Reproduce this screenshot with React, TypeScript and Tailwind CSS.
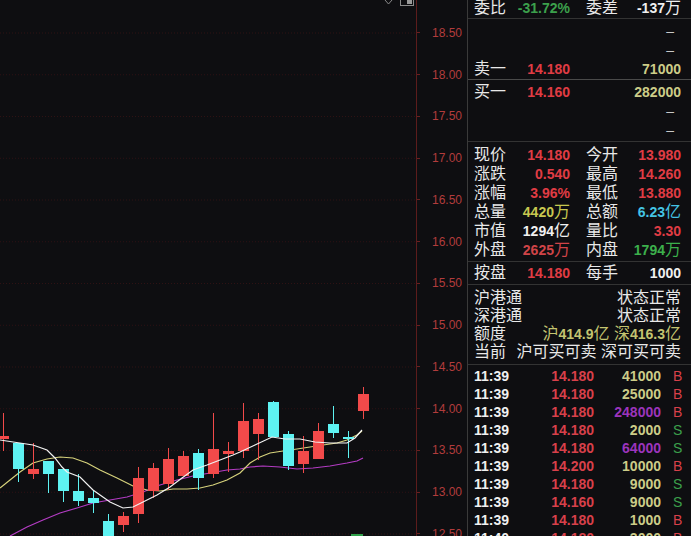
import type { ReactNode } from 'react';

type Candle = {
  x: number;
  top: number;
  bottom: number;
  high: number;
  low: number;
  up: boolean;
};

// pixel y values read off the chart (body top/bottom, wick high/low)
const raw: [number, number, number, number, boolean][] = [
  [436, 439, 413, 451, true],
  [443, 469, 443, 482, false],
  [469, 474, 443, 479, true],
  [461, 474, 461, 493, false],
  [469, 491, 469, 502, false],
  [491, 501, 474, 506, false],
  [498, 503, 491, 513, false],
  [521, 540, 514, 540, false],
  [516, 525, 512, 532, true],
  [478, 514, 467, 523, true],
  [468, 491, 463, 498, true],
  [459, 484, 448, 490, true],
  [456, 476, 451, 476, true],
  [453, 478, 449, 490, false],
  [449, 474, 413, 478, true],
  [451, 454, 442, 472, true],
  [421, 451, 403, 458, true],
  [419, 434, 413, 460, true],
  [402, 437, 401, 437, false],
  [434, 466, 431, 470, false],
  [451, 464, 436, 473, true],
  [431, 459, 423, 459, true],
  [424, 433, 406, 438, false],
  [437, 439, 431, 458, false],
  [394, 411, 387, 419, true],
];

const candles: Candle[] = raw.map(([top, bottom, high, low, up], i) => ({
  x: i === 0 ? -2 : 13 + 15 * (i - 1),
  top,
  bottom,
  high,
  low,
  up,
}));

const ma5 = '0,440 33,445 47,450 55,458 62,467 67,472 80,477 93,490 110,502 123,508 133,507 143,502 157,495 170,487 182,478 193,470 207,465 220,460 233,455 240,452 255,445 272,437 285,439 300,439 315,442 330,443 347,443 355,438 362,430';
const ma10 = '0,488 10,480 20,472 33,463 47,459 60,457 73,458 87,463 100,470 117,478 133,486 147,490 160,491 173,489 187,489 200,488 213,485 227,480 240,473 250,463 260,457 270,453 283,451 297,449 310,447 323,445 337,443 347,440 357,435 362,431';
const ma20 = '10,536 27,527 43,520 60,513 77,508 93,503 110,500 127,497 143,492 160,485 177,480 193,476 210,473 227,470 240,469 250,467 263,466 280,467 297,469 313,468 330,466 347,463 357,461 363,458';

const prices = ['18.50', '18.00', '17.50', '17.00', '16.50', '16.00', '15.50', '15.00', '14.50', '14.00', '13.50', '13.00', '12.50'];

const RED = 'text-[#e03c44]';
const YELLOW = 'text-[#cccc88]';

function Chart() {
  return (
    <svg width="416" height="536" viewBox="0 0 416 536" className="block">
      {prices.map((p, i) => (
        <line
          key={p}
          x1="0"
          x2="416"
          y1={33 + i * 41.75}
          y2={33 + i * 41.75}
          stroke="#2e1214"
          strokeDasharray="1 2"
        />
      ))}

      {/* top-right tool icons */}
      <polyline points="385,0 388.5,4 392,0" fill="none" stroke="#8a8a8a" />
      <rect x="400.5" y="-2.5" width="13" height="8" fill="none" stroke="#8a8a8a" />
      <rect x="407" y="-1" width="5" height="5" fill="#9a9a9a" />

      <polyline points={ma20} fill="none" stroke="#b43cc4" strokeWidth="1.2" />
      <polyline points={ma10} fill="none" stroke="#d6d27c" strokeWidth="1.2" />

      {candles.map((c, i) => (
        <g key={i}>
          <line
            x1={c.x + 5.5}
            x2={c.x + 5.5}
            y1={c.high}
            y2={c.low}
            stroke={c.up ? '#f24a4a' : '#5ef2f2'}
          />
          <rect
            x={c.x}
            y={c.top}
            width="11"
            height={Math.max(c.bottom - c.top, 2)}
            fill={c.up ? '#f24a4a' : '#5ef2f2'}
          />
        </g>
      ))}

      <polyline points={ma5} fill="none" stroke="#f2f2f2" strokeWidth="1.2" />
      <rect x="351" y="534" width="12" height="2" fill="#2fa04a" />
    </svg>
  );
}

function Num({ children, className = '' }: { children: ReactNode; className?: string }) {
  return <span className={`text-[14px] font-bold ${className}`}>{children}</span>;
}

function Dash() {
  return <span className="pr-[7px] text-[14px] text-[#c8c8c8]">–</span>;
}

type Stat = { label: string; value: ReactNode; color: string };

function StatRow({ left, right }: { left: Stat; right: Stat }) {
  return (
    <div className="grid h-[19px] shrink-0 grid-cols-[96px_95px] items-center gap-x-[16px]">
      <div className="flex items-center justify-between">
        <span>{left.label}</span>
        <span className={left.color}>{left.value}</span>
      </div>
      <div className="flex items-center justify-between">
        <span>{right.label}</span>
        <span className={right.color}>{right.value}</span>
      </div>
    </div>
  );
}

function Unit({ n, u }: { n: string; u: string }) {
  return (
    <>
      <span className="text-[14px] font-bold">{n}</span>
      <span className="text-[16px]">{u}</span>
    </>
  );
}

const stats: [Stat, Stat][] = [
  [
    { label: '现价', value: <Num>14.180</Num>, color: RED },
    { label: '今开', value: <Num>13.980</Num>, color: RED },
  ],
  [
    { label: '涨跌', value: <Num>0.540</Num>, color: RED },
    { label: '最高', value: <Num>14.260</Num>, color: RED },
  ],
  [
    { label: '涨幅', value: <Num>3.96%</Num>, color: RED },
    { label: '最低', value: <Num>13.880</Num>, color: RED },
  ],
  [
    { label: '总量', value: <Unit n="4420" u="万" />, color: 'text-[#c8c850]' },
    { label: '总额', value: <Unit n="6.23" u="亿" />, color: 'text-[#44c4e4]' },
  ],
  [
    { label: '市值', value: <Unit n="1294" u="亿" />, color: 'text-[#f0f0f0]' },
    { label: '量比', value: <Num>3.30</Num>, color: RED },
  ],
  [
    { label: '外盘', value: <Unit n="2625" u="万" />, color: 'text-[#d04448]' },
    { label: '内盘', value: <Unit n="1794" u="万" />, color: 'text-[#3cb04c]' },
  ],
];

const trades: [string, string, string, 'B' | 'S', boolean][] = [
  ['11:39', '14.180', '41000', 'B', false],
  ['11:39', '14.180', '25000', 'B', false],
  ['11:39', '14.180', '248000', 'B', true],
  ['11:39', '14.180', '2000', 'S', false],
  ['11:39', '14.180', '64000', 'S', true],
  ['11:39', '14.200', '10000', 'B', false],
  ['11:39', '14.180', '9000', 'S', false],
  ['11:39', '14.160', '9000', 'S', false],
  ['11:39', '14.180', '1000', 'B', false],
  ['11:40', '14.180', '3000', 'B', false],
];

function Panel() {
  return (
    <div className="flex w-[224px] shrink-0 flex-col overflow-hidden border-l border-[#3a3a3a] text-[16px] leading-none text-[#e8e8e8]">
      {/* 委比 / 委差 */}
      <div className="grid h-[19px] shrink-0 grid-cols-[96px_95px] items-center gap-x-[16px] border-b border-[#333] pb-[3px] pl-[6px]">
        <div className="flex items-center justify-between">
          <span>委比</span>
          <Num className="text-[#3ca04c]">-31.72%</Num>
        </div>
        <div className="flex items-center justify-between">
          <span>委差</span>
          <span className="text-[#f0f0f0]">
            <Unit n="-137" u="万" />
          </span>
        </div>
      </div>

      {/* sell side */}
      <div className="flex shrink-0 flex-col border-b border-[#4a4a4a] pt-[2px] pb-[1px] pl-[6px] pr-[10px]">
        <div className="flex h-[19px] items-center justify-end"><Dash /></div>
        <div className="flex h-[19px] items-center justify-end"><Dash /></div>
        <div className="grid h-[19px] grid-cols-[96px_1fr] items-center">
          <div className="flex items-center justify-between">
            <span>卖一</span>
            <Num className={RED}>14.180</Num>
          </div>
          <Num className={`text-right ${YELLOW}`}>71000</Num>
        </div>
      </div>

      {/* buy side */}
      <div className="flex shrink-0 flex-col border-b border-[#333] pt-[2px] pb-[2px] pl-[6px] pr-[10px]">
        <div className="grid h-[19px] grid-cols-[96px_1fr] items-center">
          <div className="flex items-center justify-between">
            <span>买一</span>
            <Num className={RED}>14.160</Num>
          </div>
          <Num className={`text-right ${YELLOW}`}>282000</Num>
        </div>
        <div className="flex h-[19px] items-center justify-end"><Dash /></div>
        <div className="flex h-[19px] items-center justify-end"><Dash /></div>
      </div>

      {/* quote stats */}
      <div className="flex shrink-0 flex-col border-b border-[#333] pt-[3px] pb-[2px] pl-[6px]">
        {stats.map(([l, r]) => (
          <StatRow key={l.label} left={l} right={r} />
        ))}
      </div>

      <div className="grid h-[23px] shrink-0 grid-cols-[96px_95px] items-center gap-x-[16px] border-b border-[#333] pl-[6px]">
        <div className="flex items-center justify-between">
          <span>按盘</span>
          <Num className={RED}>14.180</Num>
        </div>
        <div className="flex items-center justify-between">
          <span>每手</span>
          <Num className="text-[#f0f0f0]">1000</Num>
        </div>
      </div>

      {/* stock connect */}
      <div className="flex shrink-0 flex-col border-b border-[#333] pt-[4px] pb-[3px] pl-[6px] pr-[10px]">
        <div className="flex h-[18px] items-center justify-between">
          <span>沪港通</span>
          <span>状态正常</span>
        </div>
        <div className="flex h-[18px] items-center justify-between">
          <span>深港通</span>
          <span>状态正常</span>
        </div>
        <div className="flex h-[18px] items-center justify-between">
          <span>额度</span>
          <span className="text-[#c4c470]">
            沪<Num>414.9</Num>亿 深<Num>416.3</Num>亿
          </span>
        </div>
        <div className="flex h-[18px] items-center justify-between">
          <span>当前</span>
          <span>沪可买可卖 深可买可卖</span>
        </div>
      </div>

      {/* tick-by-tick trades */}
      <div className="flex shrink-0 flex-col pt-[2px] pl-[6px]">
        {trades.map(([t, p, v, side, big], i) => (
          <div key={i} className="flex h-[18px] shrink-0 items-center text-[14px] font-bold">
            <span className="w-[60px] text-[#f0f0f0]">{t}</span>
            <span className="w-[60px] text-right text-[#d8404a]">{p}</span>
            <span className={`w-[67px] text-right ${big ? 'text-[#9c34bc]' : YELLOW}`}>{v}</span>
            <span
              className={`ml-[12px] font-normal ${side === 'B' ? 'text-[#d8404a]' : 'text-[#3ca04c]'}`}
            >
              {side}
            </span>
          </div>
        ))}
      </div>
    </div>
  );
}

export default function App() {
  return (
    <div className="flex h-[536px] w-[691px] overflow-hidden bg-[#0e0e11] font-['Liberation_Sans','Noto_Sans_CJK_SC',sans-serif]">
      <div className="relative w-[416px] shrink-0">
        <Chart />
      </div>

      {/* price axis */}
      <div className="flex w-[51px] shrink-0 flex-col overflow-hidden border-l border-[#5c1c1c] pt-[12px] pr-[5px] text-[12px] leading-none text-[#b23c3c]">
        {prices.map((p) => (
          <div key={p} className="flex h-[41.75px] shrink-0 items-center justify-between">
            <span className="h-px w-[3px] bg-[#6a2020]" />
            <span>{p}</span>
          </div>
        ))}
      </div>

      <Panel />
    </div>
  );
}
